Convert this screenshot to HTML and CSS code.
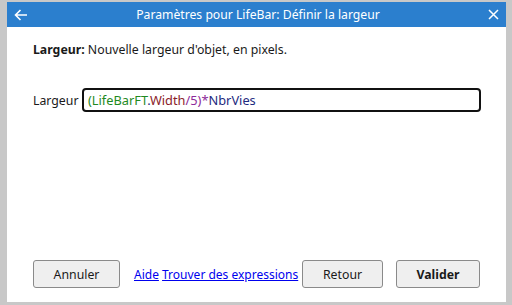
FILE: index.html
```html
<!DOCTYPE html>
<html>
<head>
    <title>Paramètres pour LifeBar</title>
    <link rel="stylesheet" href="styles.css">
</head>
<body>
    <div class="dialog">
        <div class="titlebar">
            <svg class="back" width="14" height="12" viewBox="0 0 14 12">
                <path d="M13 6H1.5M6.5 1L1.5 6l5 5" fill="none" stroke="#fff" stroke-width="1.6"/>
            </svg>
            <span class="title">Paramètres pour LifeBar: Définir la largeur</span>
            <svg class="close" width="11" height="11" viewBox="0 0 11 11">
                <path d="M1 1l9 9M10 1l-9 9" fill="none" stroke="#fff" stroke-width="1.5"/>
            </svg>
        </div>

        <div class="content">
            <p class="desc"><b>Largeur:</b> Nouvelle largeur d'objet, en pixels.</p>

            <div class="param">
                <label for="expr">Largeur</label>
                <div class="expr" id="expr"><span class="g">(LifeBarFT</span><span class="n">.</span><span class="r">Width</span><span class="p">/5)*</span><span class="n">NbrVies</span></div>
            </div>
        </div>

        <div class="footer">
            <button class="btn">Annuler</button>
            <div class="links">
                <a href="#">Aide</a>
                <a href="#">Trouver des expressions</a>
            </div>
            <button class="btn back-btn">Retour</button>
            <button class="btn primary">Valider</button>
        </div>
    </div>
</body>
</html>
```

FILE: styles.css
```css
body {
    margin: 0;
    background-color: #c8c8c8;
    font-family: "Noto Sans", "Open Sans", sans-serif;
    font-size: 12px;
    color: #1a1a1a;
}
.dialog {
    margin: 2px 6px 3px 7px;
    height: 300px;
    background-color: #ffffff;
    display: flex;
    flex-direction: column;
}
.titlebar {
    height: 25px;
    background-color: #2b7fce;
    color: white;
    display: flex;
    align-items: center;
    padding: 0 6px 0 7px;
}
.title {
    flex: 1;
    text-align: center;
    font-size: 12.2px;
}
.back {
    display: block;
}
.close {
    display: block;
    margin-right: 1px;
}
.content {
    padding: 0 25px 0 26px;
}
.desc {
    margin: 14px 0 0;
    font-size: 12.3px;
}
.param {
    display: flex;
    align-items: center;
    margin-top: 30px;
}
.param label {
    width: 49px;
    font-size: 12.3px;
}
.expr {
    flex: 1;
    height: 20px;
    line-height: 20px;
    border: 2px solid #111;
    border-radius: 4px;
    padding: 0 4px;
    font-size: 12.8px;
}
.g { color: #1f8a1f; }
.r { color: #8b1c2a; }
.p { color: #8e2a9a; }
.n { color: #1e2a80; }
.footer {
    margin-top: auto;
    display: flex;
    align-items: center;
    padding: 0 26px 14px 26px;
}
.btn {
    flex-shrink: 0;
    height: 28px;
    width: 87px;
    background-color: #efefef;
    border: 1px solid #8a8a8a;
    border-radius: 3px;
    font-family: inherit;
    font-size: 12.3px;
    color: #1a1a1a;
}
.btn.back-btn {
    width: 81px;
}
.btn.primary {
    width: 84px;
    margin-left: 13px;
    font-weight: bold;
}
.links {
    flex: 1;
    white-space: nowrap;
    margin: 0 3px 0 14px;
    font-size: 12px;
}
.links a {
    color: #0000ee;
}
```
